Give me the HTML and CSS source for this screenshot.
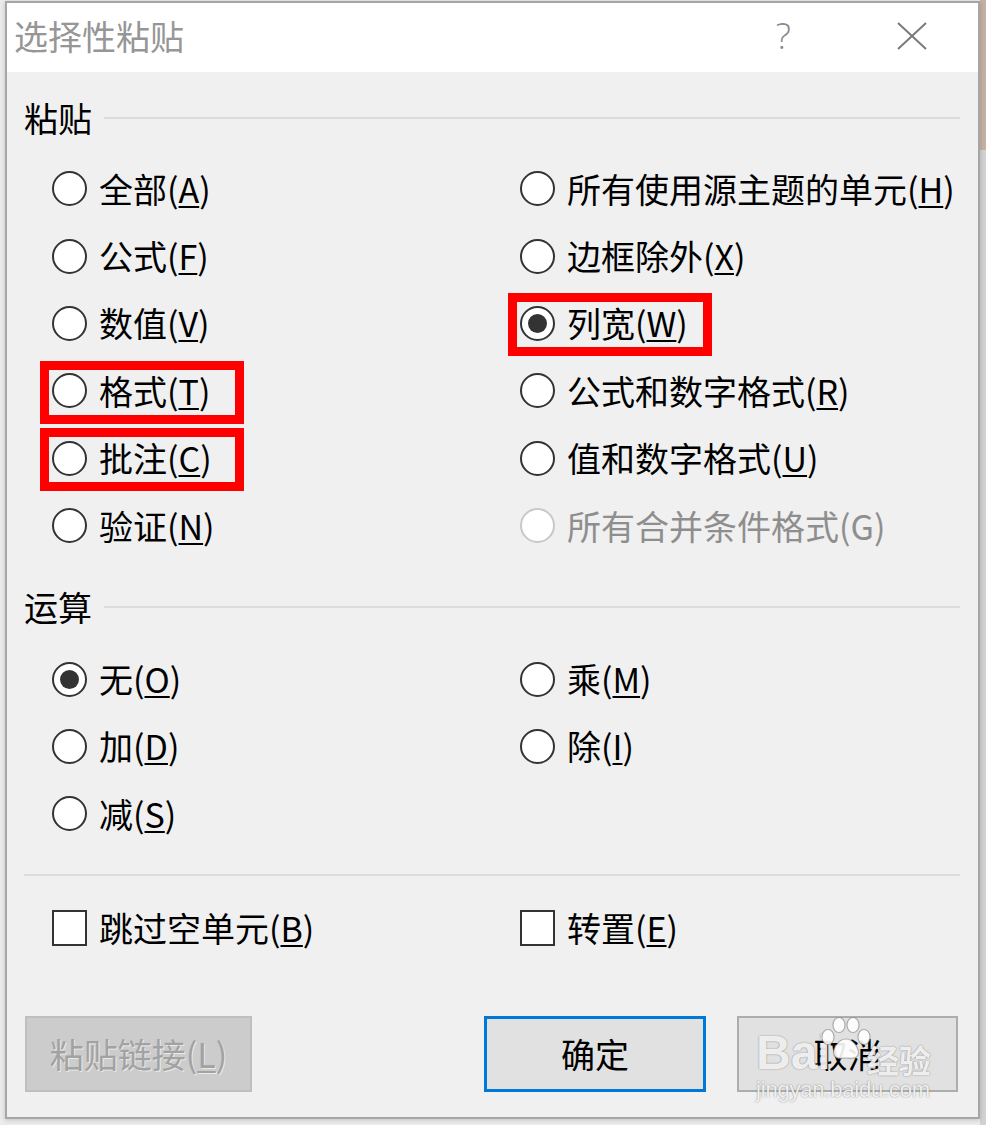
FILE: index.html
```html
<!DOCTYPE html>
<html lang="zh-CN">
<head>
<meta charset="utf-8">
<title>选择性粘贴</title>
<link rel="stylesheet" href="styles.css">
</head>
<body>
<div class="dialog">
  <div class="titlebar">
    <span class="title">选择性粘贴</span>
    <span class="help">?</span>
    <span class="close"><svg width="30" height="28" viewBox="0 0 30 28"><path d="M1 1 L29 27 M29 1 L1 27" stroke="#7a7a7a" stroke-width="2" fill="none"/></svg></span>
  </div>
  <div class="content">
    <div class="group-head"><span>粘贴</span><i class="rule"></i></div>
    <div class="grid paste">
      <div class="opt"><span class="radio"></span><span>全部(<u>A</u>)</span></div>
      <div class="opt"><span class="radio"></span><span>所有使用源主题的单元(<u>H</u>)</span></div>
      <div class="opt"><span class="radio"></span><span>公式(<u>F</u>)</span></div>
      <div class="opt"><span class="radio"></span><span>边框除外(<u>X</u>)</span></div>
      <div class="opt"><span class="radio"></span><span>数值(<u>V</u>)</span></div>
      <div class="opt marked"><span class="radio on"></span><span>列宽(<u>W</u>)</span></div>
      <div class="opt marked"><span class="radio"></span><span>格式(<u>T</u>)</span></div>
      <div class="opt"><span class="radio"></span><span>公式和数字格式(<u>R</u>)</span></div>
      <div class="opt marked"><span class="radio"></span><span>批注(<u>C</u>)</span></div>
      <div class="opt"><span class="radio"></span><span>值和数字格式(<u>U</u>)</span></div>
      <div class="opt"><span class="radio"></span><span>验证(<u>N</u>)</span></div>
      <div class="opt disabled"><span class="radio"></span><span>所有合并条件格式(G)</span></div>
    </div>
    <div class="group-head ops-head"><span>运算</span><i class="rule"></i></div>
    <div class="grid ops">
      <div class="opt"><span class="radio on"></span><span>无(<u>O</u>)</span></div>
      <div class="opt"><span class="radio"></span><span>乘(<u>M</u>)</span></div>
      <div class="opt"><span class="radio"></span><span>加(<u>D</u>)</span></div>
      <div class="opt"><span class="radio"></span><span>除(<u>I</u>)</span></div>
      <div class="opt"><span class="radio"></span><span>减(<u>S</u>)</span></div>
    </div>
    <div class="sep"></div>
    <div class="grid checks">
      <div class="opt"><span class="box"></span><span>跳过空单元(<u>B</u>)</span></div>
      <div class="opt"><span class="box"></span><span>转置(<u>E</u>)</span></div>
    </div>
    <div class="buttons">
      <div class="btn disabled">粘贴链接(<u>L</u>)</div>
      <div class="btn primary">确定</div>
      <div class="btn cancel">取消</div>
    </div>
  </div>
  <div class="watermark">
    <div class="wm-logo">
      <span class="wm-bai">Bai</span>
      <svg class="wm-paw" width="54" height="44" viewBox="0 0 54 44">
        <g fill="rgba(255,255,255,0.9)" stroke="rgba(120,120,120,0.55)" stroke-width="1.2">
          <ellipse cx="9" cy="20" rx="6" ry="7.5"/>
          <ellipse cx="20" cy="8" rx="6" ry="7.5"/>
          <ellipse cx="34" cy="8" rx="6" ry="7.5"/>
          <ellipse cx="45" cy="20" rx="6" ry="7.5"/>
          <path d="M27 22 C19 22 13 33 15 38 C17 43 24 41 27 41 C30 41 37 43 39 38 C41 33 35 22 27 22 Z"/>
        </g>
      </svg>
      <span class="wm-jy">经验</span>
    </div>
    <div class="wm-url">jingyan.baidu.com</div>
  </div>
</div>
</body>
</html>
```
FILE: styles.css
```css
html, body {
  margin: 0;
  padding: 0;
}
body {
  width: 986px;
  height: 1125px;
  overflow: hidden;
  font-family: "Noto Sans CJK SC", "Noto Sans", sans-serif;
  background: linear-gradient(#c6b0a3 0 150px, #d2d2d2 150px) right top / 6px 100% no-repeat, #ececec;
}
.dialog {
  position: relative;
  margin: 1px 0 0 5px;
  width: 975px;
  height: 1118px;
  box-sizing: border-box;
  border: 2px solid #a6a6a6;
  background: #f0f0f0;
  box-shadow: 0 1px 5px rgba(0, 0, 0, 0.18);
}
.titlebar {
  height: 69px;
  background: #fff;
  display: flex;
  align-items: center;
  padding-left: 7px;
}
.title {
  font-size: 34px;
  color: #969696;
  line-height: 1;
  margin-top: -3px;
}
.help {
  margin-left: auto;
  font-family: "Open Sans", "DejaVu Sans", sans-serif;
  font-weight: 300;
  font-size: 36px;
  color: #8a8a8a;
  line-height: 1;
  margin-top: -4px;
}
.close {
  margin-left: 106px;
  margin-right: 51px;
  display: flex;
  margin-top: -4px;
}
.content {
  padding: 26px 18px 24px 17px;
}
.group-head {
  display: flex;
  align-items: center;
  gap: 12px;
  height: 40px;
  font-size: 34px;
  line-height: 40px;
  color: #000;
}
.rule {
  flex: 1;
  height: 2px;
  background: #dcdcdc;
}
.grid {
  display: grid;
  grid-template-columns: 468px 1fr;
  grid-auto-rows: 67.4px;
  padding-left: 28px;
}
.paste {
  margin-top: 17px;
}
.ops-head {
  margin-top: 28px;
}
.ops {
  margin-top: 18px;
}
.sep {
  margin-top: 26px;
  height: 2px;
  background: #dcdcdc;
}
.checks {
  margin-top: 19px;
}
.opt {
  position: relative;
  display: flex;
  align-items: center;
  gap: 12px;
  font-size: 34px;
  line-height: 1;
  color: #000;
  white-space: nowrap;
}
.opt.disabled {
  color: #8e8e8e;
}
.opt.marked::after {
  content: "";
  position: absolute;
  left: -12px;
  top: 50%;
  margin-top: -30px;
  width: 204px;
  height: 63px;
  box-sizing: border-box;
  border: 9px solid #ff0000;
}
.radio {
  flex: none;
  width: 35px;
  height: 35px;
  box-sizing: border-box;
  border: 2.5px solid #333;
  border-radius: 50%;
  background: #fff;
  display: grid;
  place-items: center;
}
.disabled .radio {
  border-color: #c8c8c8;
}
.radio.on::before {
  content: "";
  width: 19px;
  height: 19px;
  border-radius: 50%;
  background: #333;
}
.box {
  flex: none;
  width: 35px;
  height: 36px;
  box-sizing: border-box;
  border: 2px solid #333;
  background: #fff;
}
u {
  text-decoration-thickness: 2px;
  text-underline-offset: 3px;
}
.buttons {
  margin-top: 54px;
  display: flex;
}
.btn {
  height: 76px;
  box-sizing: border-box;
  display: flex;
  align-items: center;
  justify-content: center;
  font-size: 34px;
  line-height: 1;
  color: #000;
  background: #e1e1e1;
  border: 2px solid #adadad;
}
.btn.disabled {
  width: 227px;
  margin-left: 1px;
  background: #cccccc;
  border-color: #bfbfbf;
  color: #a2a2a2;
  text-shadow: 1px 1px 0 rgba(255, 255, 255, 0.6);
}
.btn.primary {
  width: 222px;
  margin-left: auto;
  border: 3px solid #0078d7;
}
.btn.cancel {
  width: 221px;
  margin-left: 31px;
  margin-right: 2px;
}
.watermark {
  position: absolute;
  left: 749px;
  top: 1014px;
  color: rgba(255, 255, 255, 0.9);
  text-shadow: 0 0 1.5px rgba(0, 0, 0, 0.5);
  pointer-events: none;
}
.wm-logo {
  display: flex;
  align-items: flex-end;
}
.wm-bai {
  font-family: "Liberation Sans", sans-serif;
  font-weight: bold;
  font-size: 48px;
  line-height: 1;
}
.wm-paw {
  margin-left: -12px;
  margin-bottom: 16px;
}
.wm-jy {
  margin-left: -6px;
  font-size: 32px;
  line-height: 1.1;
  font-weight: bold;
}
.wm-url {
  margin-top: 2px;
  font-family: "Liberation Sans", sans-serif;
  font-size: 22px;
  line-height: 1;
  letter-spacing: -0.2px;
}
```
